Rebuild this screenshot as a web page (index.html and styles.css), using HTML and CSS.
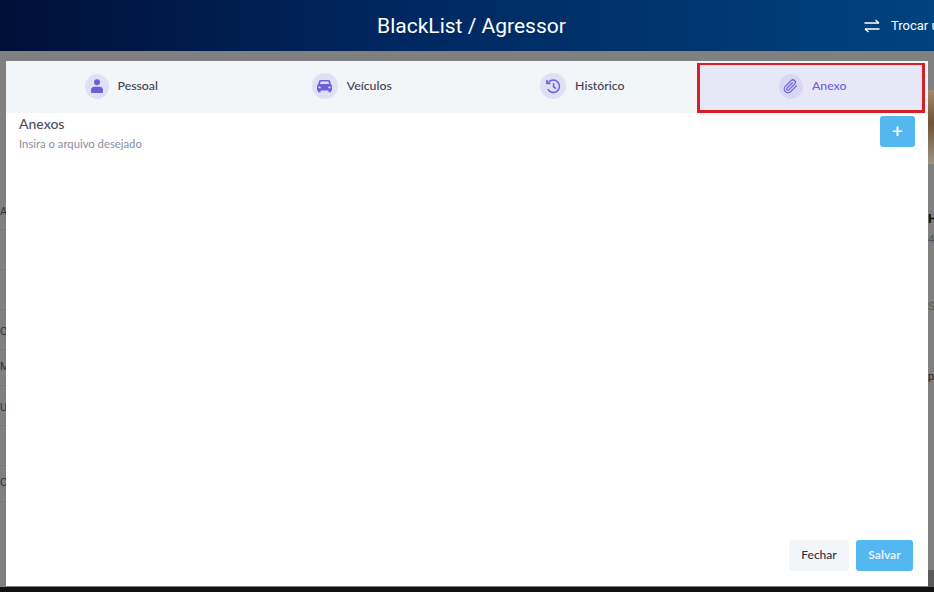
FILE: index.html
```html
<!DOCTYPE html>
<html lang="en">
<head>
  <meta charset="UTF-8">
  <title>BlackList / Agressor</title>
  <link rel="stylesheet" href="styles.css">
</head>
<body>

  <div class="topbar">
    <h1>BlackList / Agressor</h1>
    <a class="switch-user">
      <svg width="16" height="14" viewBox="0 0 16 14" fill="none" stroke="#fff" stroke-width="1.3">
        <path d="M0.5 4H15M11.5 1L15 4"/>
        <path d="M15.5 10H1M4.5 13L1 10"/>
      </svg>
      <span>Trocar usuário</span>
    </a>
  </div>

  <div class="page">
    <div class="bg-left">
      <div class="bg-row">A</div>
      <div class="bg-row"></div>
      <div class="bg-row"></div>
      <div class="bg-row">O.</div>
      <div class="bg-row short">MI</div>
      <div class="bg-row">US</div>
      <div class="bg-row"></div>
      <div class="bg-row short">C</div>
    </div>
    <div class="bg-right">
      <div class="bg-photo"></div>
      <div class="bg-name">Ht</div>
      <div class="bg-num">4</div>
      <div class="bg-num low">S</div>
      <div class="bg-num lower">pc</div>
      <div class="bg-foot"></div>
    </div>
  </div>
  <div class="page-foot"></div>

  <div class="modal">
    <div class="tabs">
      <div class="tab">
        <span class="tab-icon">
          <svg width="12" height="14" viewBox="0 0 12 14" fill="#6c5fdc">
            <circle cx="6" cy="3.3" r="3"/>
            <path d="M1 14C0.4 14 0 13.6 0 13V11C0 9.2 1.4 7.8 3.2 7.8H8.8C10.6 7.8 12 9.2 12 11V13C12 13.6 11.6 14 11 14Z"/>
          </svg>
        </span>
        <span class="tab-label">Pessoal</span>
      </div>
      <div class="tab">
        <span class="tab-icon wide">
          <svg width="15" height="14" viewBox="0 0 16 14" fill="#6c5fdc">
            <path fill-rule="evenodd" d="M3.6 0.5H12.4C13 0.5 13.5 0.9 13.7 1.4L14.8 5C15.5 5.4 16 6.1 16 7V11.2C16 11.6 15.7 11.9 15.3 11.9H15V13C15 13.4 14.7 13.7 14.3 13.7H12.9C12.5 13.7 12.2 13.4 12.2 13V11.9H3.8V13C3.8 13.4 3.5 13.7 3.1 13.7H1.7C1.3 13.7 1 13.4 1 13V11.9H0.7C0.3 11.9 0 11.6 0 11.2V7C0 6.1 0.5 5.4 1.2 5L2.3 1.4C2.5 0.9 3 0.5 3.6 0.5ZM3.9 2.2L3.1 4.8H12.9L12.1 2.2ZM1.6 7.2V8.6C1.6 9 2 9.3 2.4 9.3H4.2V8.8C4.2 8 3 7.2 1.6 7.2ZM14.4 7.2C13 7.2 11.8 8 11.8 8.8V9.3H13.6C14 9.3 14.4 9 14.4 8.6Z"/>
          </svg>
        </span>
        <span class="tab-label">Veículos</span>
      </div>
      <div class="tab">
        <span class="tab-icon wide">
          <svg width="15" height="15" viewBox="0 0 15 15" fill="none" stroke="#6c5fdc" stroke-width="1.5">
            <path d="M2.6 3.2A6.2 6.2 0 1 1 1.8 10.2"/>
            <path d="M1 1V4.4H4.4" stroke-width="1.7"/>
            <path d="M7.6 4.2V7.9L10 9.6"/>
          </svg>
        </span>
        <span class="tab-label">Histórico</span>
      </div>
      <div class="tab active">
        <span class="tab-icon">
          <svg width="15" height="15" viewBox="0 0 24 24" fill="none" stroke="#6c5fdc" stroke-width="2" stroke-linecap="round" stroke-linejoin="round">
            <path d="M21.44 11.05l-9.19 9.19a6 6 0 0 1-8.49-8.49l9.19-9.19a4 4 0 0 1 5.66 5.66l-9.2 9.19a2 2 0 0 1-2.83-2.83l8.49-8.48"/>
          </svg>
        </span>
        <span class="tab-label">Anexo</span>
      </div>
    </div>

    <div class="modal-body">
      <div class="section-head">
        <div>
          <h3>Anexos</h3>
          <p>Insira o arquivo desejado</p>
        </div>
        <button class="btn-add">+</button>
      </div>
    </div>

    <div class="modal-foot">
      <button class="btn btn-light">Fechar</button>
      <button class="btn btn-save">Salvar</button>
    </div>
  </div>

</body>
</html>
```

FILE: styles.css
```css
html, body {
  height: 100%;
}

body {
  margin: 0;
  height: 592px;
  overflow: hidden;
  display: flex;
  flex-direction: column;
  font-family: 'Lato', sans-serif;
  background-color: #808080;
  color: #3f4254;
}

.topbar {
  height: 51px;
  flex-shrink: 0;
  display: flex;
  align-items: center;
  justify-content: center;
  padding-left: 9px;
  background: linear-gradient(90deg, #000f38 0%, #00265e 40%, #00437f 100%);
  color: white;
  position: relative;
}

.topbar h1 {
  margin: 0;
  font-family: 'Roboto', sans-serif;
  font-size: 21px;
  font-weight: 400;
}

.switch-user {
  position: absolute;
  left: 864px;
  top: 18px;
  display: flex;
  align-items: center;
  gap: 11px;
  font-family: 'Roboto', sans-serif;
  font-size: 13px;
  white-space: nowrap;
}

.page {
  flex: 1;
  display: flex;
  justify-content: space-between;
  overflow: hidden;
  font-family: 'Roboto', sans-serif;
  font-size: 11px;
  color: #333;
}

.bg-left {
  padding-top: 139px;
}

.bg-row {
  height: 39px;
  line-height: 43px;
  border-bottom: 1px solid #777;
  width: 20px;
}

.bg-row.short {
  height: 35px;
  line-height: 34px;
}

.bg-right {
  width: 6px;
  overflow: hidden;
  white-space: nowrap;
  display: flex;
  flex-direction: column;
}

.bg-photo {
  height: 74px;
  margin-top: 39px;
  flex-shrink: 0;
  background: linear-gradient(180deg, #a58a6c, #6f5338 45%, #9c9484);
}

.bg-name {
  margin-top: 47px;
  font-size: 13px;
  font-weight: bold;
  color: #111;
}

.bg-num {
  margin-top: 7px;
  color: #555;
}

.bg-num.low {
  margin-top: 54px;
}

.bg-num.lower {
  margin-top: 57px;
  color: #222;
}

.bg-foot {
  margin-top: auto;
  height: 17px;
  flex-shrink: 0;
  background-color: #5a5a5a;
}

.page-foot {
  height: 5px;
  flex-shrink: 0;
  background-color: #111;
}

.modal {
  position: absolute;
  left: 6px;
  top: 61px;
  width: 922px;
  height: 525px;
  display: flex;
  flex-direction: column;
  background-color: white;
  box-sizing: border-box;
}

.tabs {
  height: 52px;
  flex-shrink: 0;
  display: grid;
  grid-template-columns: repeat(4, 1fr);
  background-color: #f3f6f9;
}

.tab {
  display: flex;
  align-items: center;
  justify-content: center;
  gap: 9px;
  padding-bottom: 2px;
  font-size: 12.3px;
  font-weight: 500;
  color: #3f4254;
  box-sizing: border-box;
}

.tab-label {
  padding-bottom: 2px;
}

.tab.active {
  margin: 2px 3px 0 -1px;
  padding: 0 0 3px 4px;
  border: 3px solid #d61f26;
  border-top-width: 2px;
  background-color: #e8e7f8;
  color: #6c5fdc;
}

.tab-icon {
  width: 24px;
  height: 25px;
  border-radius: 50%;
  background-color: #e0dff6;
  display: flex;
  align-items: center;
  justify-content: center;
}

.tab-icon.wide {
  width: 26px;
  height: 26px;
}

.tab.active .tab-icon {
  background-color: #d8d6f2;
}

.modal-body {
  flex: 1;
  padding: 2px 13px 0 13px;
}

.section-head {
  display: flex;
  justify-content: space-between;
}

h3 {
  margin: 0;
  font-size: 14px;
  line-height: 17px;
  font-weight: 500;
  color: #4d5060;
}

.section-head p {
  margin: 5px 0 0;
  font-size: 11.3px;
  line-height: 14px;
  color: #8b8e9f;
}

.btn-add {
  width: 35px;
  height: 31px;
  margin-top: 1px;
  padding: 0;
  border: none;
  border-radius: 3px;
  background-color: #54b7f0;
  color: white;
  font-size: 19px;
  line-height: 29px;
  font-family: 'Roboto', sans-serif;
  cursor: pointer;
}

.modal-foot {
  display: flex;
  justify-content: flex-end;
  gap: 7px;
  padding: 0 15px 15px 0;
}

.btn {
  height: 31px;
  padding: 0 0 2px;
  border: none;
  border-radius: 3px;
  font-family: 'Lato', sans-serif;
  font-size: 12px;
  font-weight: 500;
  cursor: pointer;
}

.btn-light {
  width: 60px;
  background-color: #f3f6f9;
  color: #2f3142;
}

.btn-save {
  width: 57px;
  background-color: #54b7f0;
  color: #e4f3fc;
  font-weight: bold;
}
```
